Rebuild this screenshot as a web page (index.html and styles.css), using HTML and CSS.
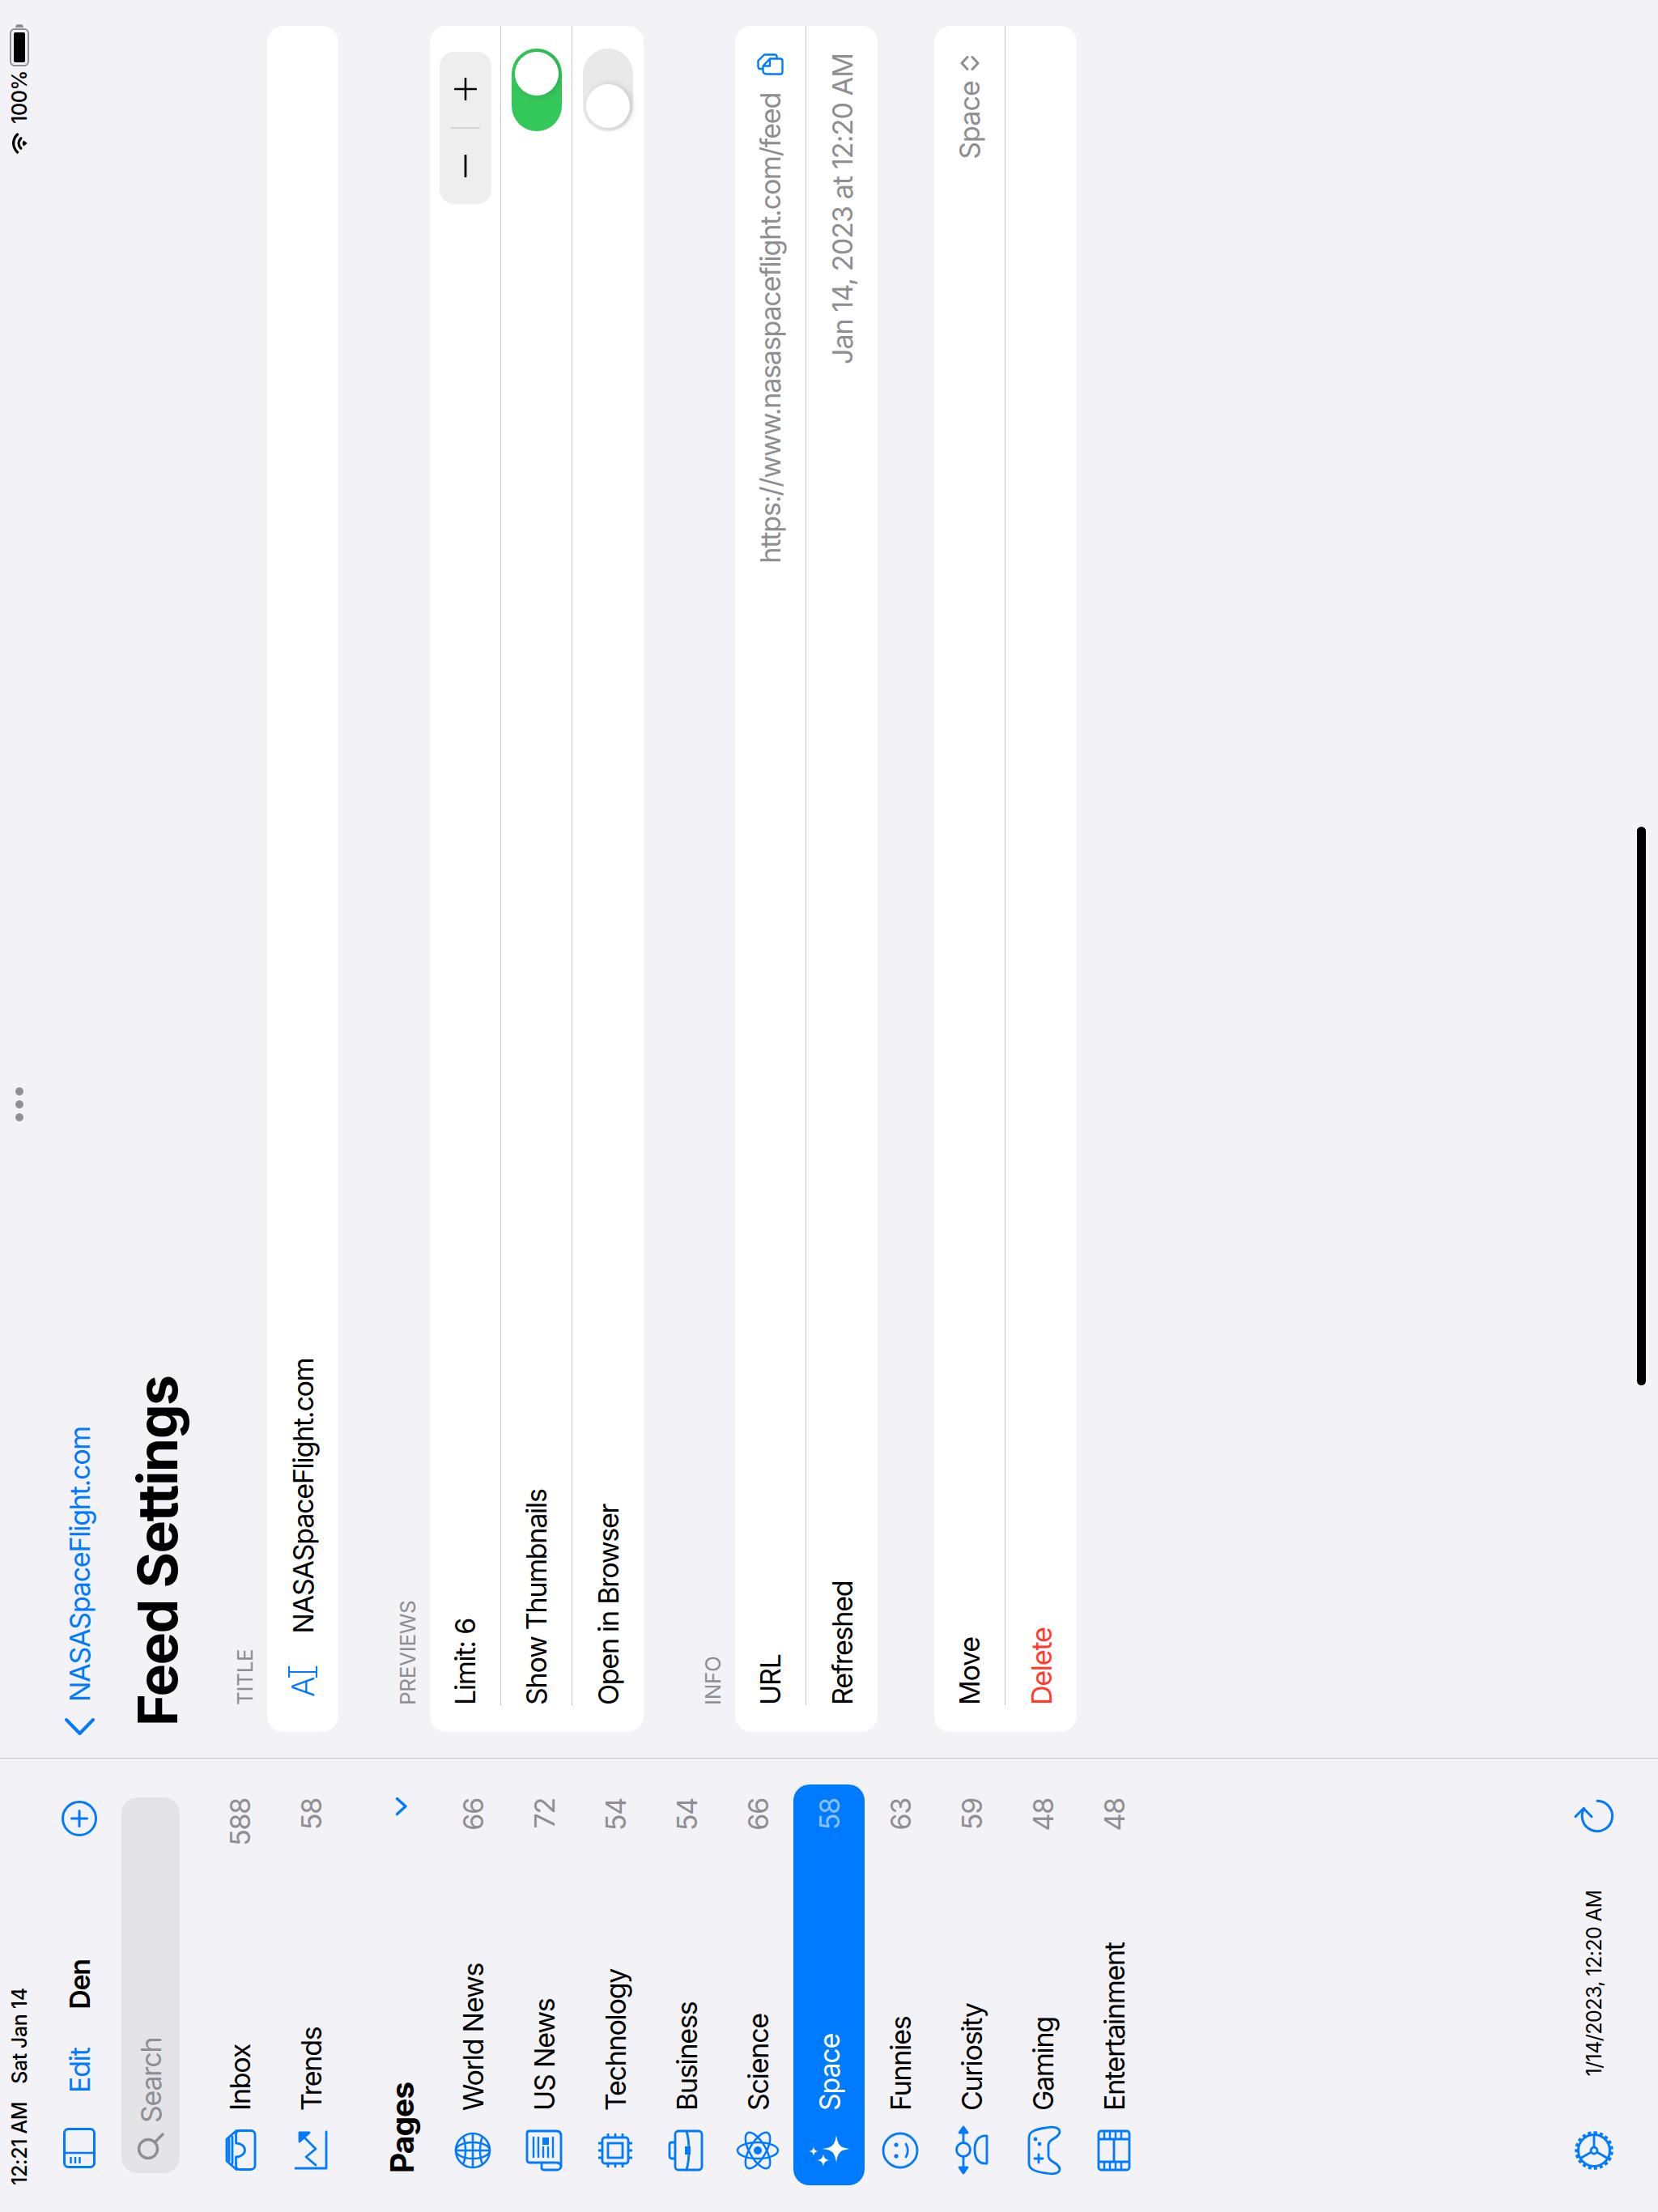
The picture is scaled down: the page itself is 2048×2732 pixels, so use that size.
FILE: index.html
```html
<!DOCTYPE html>
<html>
<head>
    <meta charset="utf-8">
    <title>Feed Settings</title>
    <link rel="stylesheet" href="styles.css">
</head>
<body>
<div class="device">
<div class="screen">
    <div class="statusbar">
        <div class="status-left">
            <span>12:21 AM</span>
            <span>Sat Jan 14</span>
        </div>
        <div class="dots"><i></i><i></i><i></i></div>
        <div class="status-right">
            <svg class="wifi" width="26" height="20" viewBox="0 0 26 20" fill="none" stroke="#000" stroke-width="3.2" stroke-linecap="round">
                <path d="M2 7.5C8.5 1 17.5 1 24 7.5"/>
                <path d="M6.8 11.8C10.6 8.2 15.4 8.2 19.2 11.8"/>
                <path d="M13 18.6L10.5 15.4C12 14.2 14 14.2 15.5 15.4Z" fill="#000" stroke-width="1.4"/>
            </svg>
            <span>100%</span>
            <div class="battery"><b></b></div>
        </div>
    </div>

    <aside class="sidebar">
        <div class="side-nav">
            <div class="side-nav-left">
                <svg class="blue-icon" width="50" height="40" viewBox="0 0 50 40" fill="none">
                    <rect x="1.5" y="1.5" width="47" height="37" rx="5" stroke="currentColor" stroke-width="3"/>
                    <path d="M19 2V38M6 9.500H14M6 15H14M6 20.500H14" stroke="currentColor" stroke-width="2.500"/>
                </svg>
                <span class="link">Edit</span>
            </div>
            <span class="side-title">Den</span>
            <svg class="blue-icon add-icon" width="44" height="44" viewBox="0 0 44 44" fill="none" stroke="currentColor" stroke-linecap="round">
                <circle cx="22" cy="22" r="20.500" stroke-width="3"/>
                <path d="M22 12.500V31.500M12.500 22H31.500" stroke-width="3"/>
            </svg>
        </div>

        <div class="search">
            <svg width="34" height="34" viewBox="0 0 34 34" fill="none" stroke="#8e8e93" stroke-linecap="round">
                <circle cx="14" cy="14" r="11.500" stroke-width="3.500"/>
                <path d="M23 23L32 32" stroke-width="3.500"/>
            </svg>
            <span>Search</span>
        </div>

        <ul class="feed-list">
            <li class="feed-row">
                <svg class="row-icon" viewBox="0 0 60 48" fill="none" stroke="currentColor" stroke-width="2.800" stroke-linejoin="round" stroke-linecap="round">
                    <path d="M6.500 24V38C6.500 41 8.500 43 11.500 43H49.500C52.500 43 54.500 41 54.500 38V24C54.500 21 52.500 19.500 50 19.500H39C39 26 35 30.500 30.500 30.500C26 30.500 22 26 22 19.500H11C8.500 19.500 6.500 21 6.500 24Z"/>
                    <path d="M6.500 20L17 8H44L54.500 20M14 15H47M17 11H44"/>
                </svg>
                <span class="row-name">Inbox</span>
                <span class="row-count">588</span>
            </li>
            <li class="feed-row">
                <svg class="row-icon" viewBox="0 0 60 48" fill="none" stroke="currentColor" stroke-width="2.800" stroke-linecap="round" stroke-linejoin="round">
                    <path d="M8 5V43H53"/>
                    <path d="M12 30L22 18L32 30L47 15"/>
                    <path d="M41 10H52V22Z" fill="currentColor"/>
                </svg>
                <span class="row-name">Trends</span>
                <span class="row-count">58</span>
            </li>

            <li class="pages-head">
                <span>Pages</span>
                <svg class="blue-icon" width="24" height="16" viewBox="0 0 24 16" fill="none" stroke="currentColor" stroke-width="3.400" stroke-linecap="round" stroke-linejoin="round">
                    <path d="M2.500 2.500L12 13L21.500 2.500"/>
                </svg>
            </li>

            <li class="feed-row">
                <svg class="row-icon" viewBox="0 0 60 48" fill="none" stroke="currentColor" stroke-width="2.500">
                    <circle cx="30" cy="24" r="21"/>
                    <ellipse cx="30" cy="24" rx="10" ry="21"/>
                    <path d="M30 3V45M9 24H51M13 12C22 16 38 16 47 12M13 36C22 32 38 32 47 36"/>
                </svg>
                <span class="row-name">World News</span>
                <span class="row-count">66</span>
            </li>
            <li class="feed-row">
                <svg class="row-icon" viewBox="0 0 60 48" fill="none" stroke="currentColor" stroke-width="2.800" stroke-linecap="round" stroke-linejoin="round">
                    <path d="M15 37V6C15 4 16 3 18 3H51C53 3 54 4 54 6V39C54 43 52 45 48 45H11C8 45 6 43 6 40V24C6 22 7 21 9 21H15"/>
                    <path d="M15 39C15 42 13 45 11 45"/>
                    <path d="M22 11H46M22 17H46M22 23H34M22 29H34M22 35H46" stroke-width="2.400"/>
                    <rect x="37" y="22" width="9" height="8" fill="currentColor" stroke="none"/>
                </svg>
                <span class="row-name">US News</span>
                <span class="row-count">72</span>
            </li>
            <li class="feed-row">
                <svg class="row-icon" viewBox="0 0 60 48" fill="none" stroke="currentColor" stroke-width="2.800">
                    <rect x="14" y="8" width="32" height="32" rx="3"/>
                    <rect x="21" y="15" width="18" height="18"/>
                    <path d="M21 3V8M30 3V8M39 3V8M21 40V45M30 40V45M39 40V45M9 15H14M9 24H14M9 33H14M46 15H51M46 24H51M46 33H51"/>
                </svg>
                <span class="row-name">Technology</span>
                <span class="row-count">54</span>
            </li>
            <li class="feed-row">
                <svg class="row-icon" viewBox="0 0 60 48" fill="none" stroke="currentColor" stroke-width="2.800" stroke-linejoin="round">
                    <rect x="6" y="10" width="48" height="33" rx="4"/>
                    <path d="M20 10V6C20 4 21 3 23 3H37C39 3 40 4 40 6V10"/>
                    <path d="M6 24C20 28 40 28 54 24"/>
                    <rect x="25" y="22" width="10" height="7" fill="currentColor" stroke="none"/>
                </svg>
                <span class="row-name">Business</span>
                <span class="row-count">54</span>
            </li>
            <li class="feed-row">
                <svg class="row-icon" viewBox="0 0 60 48" fill="none" stroke="currentColor" stroke-width="2.500">
                    <ellipse cx="30" cy="24" rx="25" ry="10" transform="rotate(90 30 24)"/>
                    <ellipse cx="30" cy="24" rx="25" ry="10" transform="rotate(30 30 24)"/>
                    <ellipse cx="30" cy="24" rx="25" ry="10" transform="rotate(150 30 24)"/>
                    <circle cx="30" cy="24" r="5" fill="currentColor" stroke="none"/>
                </svg>
                <span class="row-name">Science</span>
                <span class="row-count">66</span>
            </li>
            <li class="feed-row is-selected">
                <svg class="row-icon" viewBox="0 0 60 48" fill="currentColor">
                    <path d="M32 15C33.500 28 36 31 49 33C36 35 33.500 38 32 50C30.500 38 28 35 15 33C28 31 30.500 28 32 15Z"/>
                    <path d="M29 -1C29.500 3 31 4.500 35 5C31 5.500 29.500 7 29 11C28.500 7 27 5.500 23 5C27 4.500 28.500 3 29 -1Z"/>
                    <path d="M18 9C18.800 14.500 20.500 16.200 26 17C20.500 17.800 18.800 19.500 18 25C17.200 19.500 15.500 17.800 10 17C15.500 16.200 17.200 14.500 18 9Z"/>
                </svg>
                <span class="row-name">Space</span>
                <span class="row-count">58</span>
            </li>
            <li class="feed-row">
                <svg class="row-icon" viewBox="0 0 60 48" fill="none" stroke="currentColor" stroke-width="2.800" stroke-linecap="round">
                    <circle cx="30" cy="24" r="21"/>
                    <circle cx="23" cy="19" r="2.600" fill="currentColor" stroke="none"/>
                    <circle cx="37" cy="19" r="2.600" fill="currentColor" stroke="none"/>
                    <path d="M22 31C26 34 34 34 38 31"/>
                </svg>
                <span class="row-name">Funnies</span>
                <span class="row-count">63</span>
            </li>
            <li class="feed-row">
                <svg class="row-icon" viewBox="0 0 60 48" fill="none" stroke="currentColor" stroke-width="2.800" stroke-linecap="round" stroke-linejoin="round">
                    <circle cx="31" cy="14" r="8.500"/>
                    <path d="M14 43H48C49 33 42 28 31 28C20 28 13 33 14 43Z"/>
                    <path d="M22 14H8M40 14H53"/>
                    <path d="M9 9L2 14L9 19ZM52 9L59 14L52 19Z" fill="currentColor"/>
                </svg>
                <span class="row-name">Curiosity</span>
                <span class="row-count">59</span>
            </li>
            <li class="feed-row">
                <svg class="row-icon" viewBox="0 0 60 48" fill="none" stroke="currentColor" stroke-width="2.800" stroke-linecap="round" stroke-linejoin="round">
                    <path d="M14 7H46C53 7 56 14 58 28C60 38 58 45 53 45C49 45 46 40 43 35C41 32 39 31 36 31H24C21 31 19 32 17 35C14 40 11 45 7 45C2 45 0 38 2 28C4 14 7 7 14 7Z"/>
                    <path d="M20 14V24M15 19H25"/>
                    <circle cx="38" cy="20" r="2.400" fill="currentColor" stroke="none"/>
                    <circle cx="44" cy="15" r="2.400" fill="currentColor" stroke="none"/>
                </svg>
                <span class="row-name">Gaming</span>
                <span class="row-count">48</span>
            </li>
            <li class="feed-row">
                <svg class="row-icon" viewBox="0 0 60 48" fill="none" stroke="currentColor" stroke-width="2.800">
                    <rect x="6" y="5" width="48" height="38" rx="3"/>
                    <path d="M16 5V43M44 5V43M16 24H44"/>
                    <path d="M7 12H15M7 19H15M7 26H15M7 33H15M45 12H53M45 19H53M45 26H53M45 33H53" stroke-width="2.400"/>
                </svg>
                <span class="row-name">Entertainment</span>
                <span class="row-count">48</span>
            </li>
        </ul>

        <div class="side-toolbar">
            <svg class="blue-icon" width="48" height="48" viewBox="0 0 48 48" fill="none" stroke="currentColor">
                <circle cx="24" cy="24" r="19.500" stroke-width="3"/>
                <circle cx="24" cy="24" r="22" stroke-width="3.500" stroke-dasharray="4 3.200"/>
                <circle cx="24" cy="24" r="4" stroke-width="2.800"/>
                <path d="M28 24H43M22 20.500L14.500 7.500M22 27.500L14.500 40.500" stroke-width="2.800"/>
            </svg>
            <span class="side-date">1/14/2023, 12:20 AM</span>
            <svg class="blue-icon" width="48" height="48" viewBox="0 -4 48 48" fill="none" stroke="currentColor" stroke-width="3" stroke-linecap="round" stroke-linejoin="round">
                <path d="M42.700 24A18.700 18.700 0 1 1 33.500 7.800"/>
                <path d="M23.300 -3L33.500 7L23.300 17"/>
            </svg>
        </div>
    </aside>

    <main class="detail">
        <div class="back-row">
            <svg class="blue-icon" width="23" height="39" viewBox="0 0 23 39" fill="none" stroke="currentColor" stroke-width="4" stroke-linecap="round" stroke-linejoin="round">
                <path d="M20 3L3 19.500L20 36"/>
            </svg>
            <span class="link">NASASpaceFlight.com</span>
        </div>
        <h1 class="page-title">Feed Settings</h1>

        <div class="group-label">TITLE</div>
        <section class="card">
            <div class="card-row">
                <span class="title-glyph">A<svg width="14" height="36" viewBox="0 0 14 36" fill="none" stroke="currentColor" stroke-width="2.200"><path d="M7 1V35M0 1H14M0 35H14"/></svg></span>
                <span class="title-value">NASASpaceFlight.com</span>
            </div>
        </section>

        <div class="group-label spaced">PREVIEWS</div>
        <section class="card">
            <div class="card-row">
                <span>Limit: 6</span>
                <div class="stepper">
                    <span class="step-btn">
                        <svg width="28" height="4" viewBox="0 0 28 4" stroke="#000" stroke-width="2.800" stroke-linecap="round"><path d="M1 2H27"/></svg>
                    </span>
                    <i class="step-line"></i>
                    <span class="step-btn">
                        <svg width="28" height="28" viewBox="0 0 28 28" stroke="#000" stroke-width="2.600" stroke-linecap="round"><path d="M14 1V27M1 14H27"/></svg>
                    </span>
                </div>
            </div>
            <div class="card-row">
                <span>Show Thumbnails</span>
                <div class="toggle is-on"><i></i></div>
            </div>
            <div class="card-row">
                <span>Open in Browser</span>
                <div class="toggle"><i></i></div>
            </div>
        </section>

        <div class="group-label spaced">INFO</div>
        <section class="card">
            <div class="card-row">
                <span>URL</span>
                <div class="row-value">
                    <span class="url-text">https://www.nasaspaceflight.com/feed</span>
                    <svg class="blue-icon copy-icon" width="27" height="33" viewBox="0 0 27 33" fill="none" stroke="currentColor" stroke-width="2.400" stroke-linejoin="round">
                        <path d="M8 7V4C8 2.500 9 1.500 10.500 1.500H18L25.500 9V22C25.500 23.500 24.500 24.500 23 24.500H20.500"/>
                        <path d="M1.500 12C1.500 9 3 7.500 5.500 7.500H11.500L20.500 16V28.500C20.500 30.500 19.500 31.500 17.500 31.500H4.500C2.500 31.500 1.500 30.500 1.500 28.500Z"/>
                        <path d="M11.500 7.500V16H20.500"/>
                    </svg>
                </div>
            </div>
            <div class="card-row">
                <span>Refreshed</span>
                <div class="row-value">Jan 14, 2023 at 12:20 AM</div>
            </div>
        </section>

        <section class="card move-card">
            <div class="card-row">
                <span>Move</span>
                <div class="row-value move-value">
                    <span>Space</span>
                    <svg width="20" height="24" viewBox="0 0 20 24" fill="none" stroke="#8e8e93" stroke-width="3" stroke-linecap="round" stroke-linejoin="round">
                        <path d="M2.500 9L10 2L17.500 9M2.500 15L10 22L17.500 15"/>
                    </svg>
                </div>
            </div>
            <div class="card-row">
                <span class="danger">Delete</span>
            </div>
        </section>
    </main>

    <div class="home-bar"></div>
</div>
</div>
</body>
</html>
```

FILE: styles.css
```css
body {
    margin: 0;
    background-color: #f2f2f7;
}

.device {
    width: 2048px;
    height: 2732px;
    overflow: hidden;
}

/* the whole app is landscape, turned on its side */
.screen {
    position: relative;
    display: flex;
    width: 2732px;
    height: 2048px;
    transform-origin: 0 0;
    transform: translateY(2732px) rotate(-90deg);
    font-family: Inter, "Liberation Sans", sans-serif;
    font-size: 34px;
    letter-spacing: -1.25px;
    color: #000;
}

ul {
    margin: 0;
    padding: 0;
    list-style: none;
}

.blue-icon {
    color: #007aff;
    flex: none;
    overflow: visible;
}

.link {
    color: #007aff;
}

/* status bar */
.statusbar {
    position: absolute;
    left: 0;
    right: 0;
    top: 0;
    height: 48px;
    display: grid;
    grid-template-columns: 1fr auto 1fr;
    align-items: center;
    padding: 0 30px 0 33px;
    font-size: 25px;
    font-weight: 500;
    letter-spacing: -0.4px;
}

.status-left {
    display: flex;
    gap: 22px;
}

.status-right {
    display: flex;
    justify-content: flex-end;
    align-items: center;
    gap: 5px;
}

.wifi {
    margin-right: 6px;
}

.dots {
    display: flex;
    gap: 6px;
}

.dots i {
    width: 10px;
    height: 10px;
    border-radius: 50%;
    background: #8e8e93;
}

.battery {
    position: relative;
    width: 47px;
    height: 24px;
    box-sizing: border-box;
    margin-right: 5px;
    padding: 3px;
    border: 2px solid #8e8e93;
    border-radius: 6px;
}

.battery b {
    display: block;
    height: 100%;
    border-radius: 2px;
    background: #000;
}

.battery:after {
    content: "";
    position: absolute;
    right: -7px;
    top: 5px;
    width: 4px;
    height: 10px;
    border-radius: 0 4px 4px 0;
    background: #8e8e93;
}

/* sidebar */
.sidebar {
    display: flex;
    flex-direction: column;
    flex: none;
    width: 561px;
    height: 100%;
    box-sizing: border-box;
    padding-top: 76px;
    border-right: 1px solid #c6c6c8;
}

.side-nav {
    display: grid;
    grid-template-columns: 1fr auto 1fr;
    align-items: center;
    height: 44px;
    padding: 0 52px 0 54px;
}

.side-nav-left {
    display: flex;
    align-items: center;
    gap: 43px;
}

.side-title {
    font-weight: 600;
}

.add-icon {
    justify-self: end;
}

.search {
    display: flex;
    align-items: center;
    gap: 12px;
    height: 72px;
    margin: 30px 48px 30px 48px;
    padding-left: 16px;
    border-radius: 20px;
    background: #e3e3e8;
    color: #8e8e93;
}

.feed-row {
    display: flex;
    align-items: center;
    height: 88px;
    margin: 0 32px 0 33px;
    padding: 0 17px 0 13px;
    border-radius: 20px;
}

.row-icon {
    flex: none;
    width: 60px;
    height: 48px;
    margin-right: 19px;
    color: #007aff;
    overflow: visible;
}

.row-name {
    flex: 1;
}

.row-count {
    color: #8e8e93;
}

.is-selected {
    background: #007aff;
    color: #fff;
}

.is-selected .row-icon {
    color: #fff;
}

.is-selected .row-count {
    color: rgba(255, 255, 255, 0.55);
}

.pages-head {
    display: flex;
    align-items: center;
    justify-content: space-between;
    height: 88px;
    margin: 24px 47px 0 48px;
    font-size: 39px;
    font-weight: 700;
    letter-spacing: -1px;
}

.side-toolbar {
    display: flex;
    align-items: center;
    justify-content: space-between;
    height: 48px;
    margin-top: auto;
    padding: 0 47px 0 52px;
    margin-bottom: 55px;
}

.side-date {
    font-size: 25px;
    letter-spacing: -0.55px;
}

/* detail page */
.detail {
    flex: 1;
    min-width: 0;
    padding: 76px 32px 0 32px;
}

.back-row {
    display: flex;
    align-items: center;
    gap: 19px;
    height: 44px;
    margin-left: -5px;
}

.page-title {
    margin: 34px 0 0 7px;
    font-size: 68px;
    line-height: 80px;
    font-weight: 700;
    letter-spacing: -1.5px;
}

.group-label {
    height: 43px;
    margin-top: 53px;
    padding-left: 33px;
    box-sizing: border-box;
    font-size: 26px;
    line-height: 32px;
    letter-spacing: -0.3px;
    color: #8e8e93;
}

.spaced {
    margin-top: 70px;
}

.card {
    padding-left: 33px;
    border-radius: 20px;
    background: #fff;
}

.move-card {
    margin-top: 70px;
}

.card-row {
    display: flex;
    align-items: center;
    justify-content: space-between;
    height: 88px;
    box-sizing: border-box;
    padding-right: 32px;
    border-bottom: 1px solid #c6c6c8;
}

.card-row:last-child {
    border-bottom: none;
}

.title-value {
    flex: 1;
    margin-left: 40px;
}

.title-glyph {
    display: flex;
    align-items: center;
    margin-left: 10px;
    color: #007aff;
    font-size: 38px;
    font-weight: 300;
}

.stepper {
    display: flex;
    align-items: center;
    width: 188px;
    height: 64px;
    border-radius: 18px;
    background: #eeeeef;
}

.step-btn {
    display: flex;
    flex: 1;
    align-items: center;
    justify-content: center;
}

.step-line {
    width: 2px;
    height: 36px;
    background: #d4d4d6;
}

.toggle {
    display: flex;
    align-items: center;
    width: 102px;
    height: 62px;
    box-sizing: border-box;
    margin-right: -4px;
    padding: 0 4px;
    border-radius: 31px;
    background: #e9e9ea;
}

.toggle i {
    width: 54px;
    height: 54px;
    border-radius: 50%;
    background: #fff;
    box-shadow: 0 3px 8px rgba(0, 0, 0, 0.15);
}

.toggle.is-on {
    justify-content: flex-end;
    background: #34c759;
}

.row-value {
    display: flex;
    align-items: center;
    margin-right: 2px;
    letter-spacing: -0.9px;
    color: #8e8e93;
}

.url-text {
    letter-spacing: -1.2px;
}

.copy-icon {
    margin-left: 22px;
}

.move-value {
    gap: 12px;
    margin-right: 4px;
}

.danger {
    color: #ff3b30;
}

.home-bar {
    position: absolute;
    left: 1021px;
    bottom: 15px;
    width: 690px;
    height: 11px;
    border-radius: 6px;
    background: #000;
}
```
